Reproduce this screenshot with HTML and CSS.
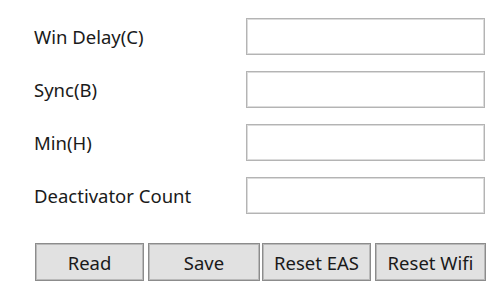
FILE: index.html
```html
<!DOCTYPE html>
<html>
<head>
<meta charset="utf-8">
<link rel="stylesheet" href="styles.css">
</head>
<body>
<div class="panel">
  <div class="form">
    <label class="lbl">Win Delay(C)</label><input class="field" type="text">
    <label class="lbl">Sync(B)</label><input class="field" type="text">
    <label class="lbl">Min(H)</label><input class="field" type="text">
    <label class="lbl">Deactivator Count</label><input class="field" type="text">
  </div>
  <div class="buttons">
    <button class="btn b1">Read</button>
    <button class="btn b2">Save</button>
    <button class="btn b3">Reset EAS</button>
    <button class="btn b4">Reset Wifi</button>
  </div>
</div>
</body>
</html>
```
FILE: styles.css
```css
html, body {
  margin: 0;
  padding: 0;
  background: #ffffff;
}
.panel {
  width: 498px;
  height: 284px;
  box-sizing: border-box;
  padding: 18px 0 0 34px;
  font-family: "Noto Sans", "Open Sans", sans-serif;
  font-size: 18.5px;
  color: #1a1a1a;
}
.form {
  display: grid;
  grid-template-columns: 212px 239px;
  grid-auto-rows: 37px;
  row-gap: 16px;
  align-items: center;
}
.lbl {
  line-height: 37px;
  white-space: nowrap;
}
.field {
  box-sizing: border-box;
  width: 239px;
  height: 37px;
  margin: 0;
  border: 1px solid #b4b4b4;
  box-shadow: inset 0 0 0 1px #dcdcdc;
  background: #ffffff;
  outline: none;
}
.buttons {
  display: flex;
  margin-top: 29px;
  margin-left: 1px;
}
.btn {
  box-sizing: border-box;
  height: 38px;
  margin: 0;
  padding: 0;
  border: 1px solid #8c8c8c;
  box-shadow: inset 0 0 0 1px #b9b9b9;
  background: #e1e1e1;
  font-family: "Noto Sans", "Open Sans", sans-serif;
  font-size: 18.5px;
  color: #1a1a1a;
}
.b1 { width: 109px; }
.b2 { width: 112px; margin-left: 4px; }
.b3 { width: 109px; margin-left: 2px; }
.b4 { width: 111px; margin-left: 4px; }
```
